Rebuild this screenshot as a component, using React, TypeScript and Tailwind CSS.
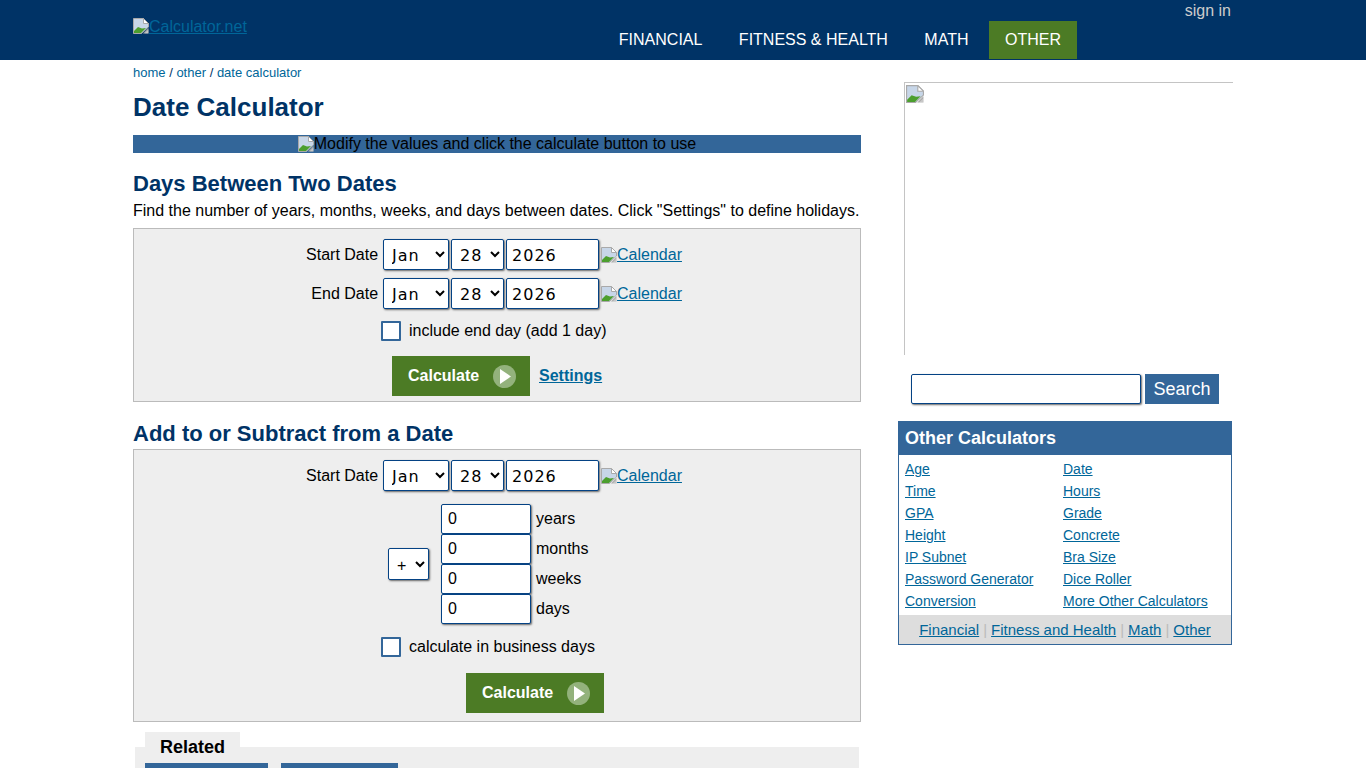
import React from "react";

const BrokenImage = ({ size = 16 }: { size?: number }) => (
    <svg width={size} height={size} viewBox="0 0 16 16" className="inline-block shrink-0 align-[-2px]">
        <path d="M0.5 0.5H10.5L15.5 5.5V9L8.5 15.5H0.5Z" fill="#c7d6e8" stroke="#a9a9a9" />
        <path d="M10.5 0.5V5.5H15.5Z" fill="#fff" stroke="#a9a9a9" />
        <path d="M1 15V13L5 9L9 10.5L13 10L8 15Z" fill="#4c9f2e" />
        <path d="M10 15.5L15.5 10V15.5Z" fill="#a9a9a9" />
        <path d="M11.5 15.5L15.5 11.5V15.5Z" fill="#ffffff" fillOpacity="0.35" />
    </svg>
);

const selectClass =
    "h-[31px] bg-white border border-[#044284] rounded-[2px] shadow-[1px_1px_2px_#666] font-['DejaVu_Sans',sans-serif] text-[16px] tracking-[1px] text-black pl-[4px] pt-[2px]";

const textInputClass =
    "bg-white border border-[#044284] rounded-[2px] shadow-[1px_1px_2px_#666] text-black outline-none";

const DateRow = ({ label, top }: { label: string; top: string }) => (
    <div className={`flex items-center justify-center pr-[6px] ${top}`}>
        <span className="w-[72px] text-right whitespace-nowrap">{label}</span>
        <select defaultValue="Jan" className={`${selectClass} ml-[5px] w-[66px]`}>
            <option>Jan</option>
            <option>Feb</option>
        </select>
        <select defaultValue="28" className={`${selectClass} ml-[2px] w-[53px]`}>
            <option>28</option>
            <option>29</option>
        </select>
        <input
            defaultValue="2026"
            className={`${textInputClass} ml-[2px] w-[93px] h-[31px] pl-[5px] pt-[2px] font-['DejaVu_Sans',sans-serif] tracking-[1px]`}
        />
        <a className="ml-[2px] flex items-center underline text-[#006699] cursor-pointer">
            <BrokenImage />
            Calendar
        </a>
    </div>
);

const CheckRow = ({ label, top }: { label: string; top: string }) => (
    <div className={`flex items-center ml-[247px] ${top}`}>
        <span className="w-5 h-5 bg-white border-2 border-[#336699] rounded-[1px] shrink-0" />
        <span className="ml-2 whitespace-nowrap">{label}</span>
    </div>
);

const CalculateButton = () => (
    <button className="w-[138px] h-10 bg-[#4c7b25] text-white font-bold flex items-center pl-4">
        Calculate
        <span className="ml-[14px] w-[23px] h-[23px] rounded-full bg-[#93b27c] flex items-center justify-center">
            <svg width="11" height="15" viewBox="0 0 11 15" className="ml-[2px]">
                <path d="M0 0L11 7.5L0 15Z" fill="#fff" />
            </svg>
        </span>
    </button>
);

const AmountRow = ({ label }: { label: string }) => (
    <div className="flex items-center">
        <input defaultValue="0" className={`${textInputClass} w-[90px] h-[30px] pl-[6px]`} />
        <span className="ml-[5px]">{label}</span>
    </div>
);

const otherLinks = [
    ["Age", "Date"],
    ["Time", "Hours"],
    ["GPA", "Grade"],
    ["Height", "Concrete"],
    ["IP Subnet", "Bra Size"],
    ["Password Generator", "Dice Roller"],
    ["Conversion", "More Other Calculators"],
];

const navItems = ["FINANCIAL", "FITNESS & HEALTH", "MATH", "OTHER"];

const App = () => {
    return (
        <div className="h-screen overflow-hidden bg-white font-['Liberation_Sans',Arial,sans-serif] text-[16px] leading-[18px] text-black">
            <div className="h-[60px] bg-[#003366]">
                <div className="w-[1100px] h-full mx-auto flex relative">
                    <a className="mt-[18px] h-[18px] flex items-start underline text-[#006699] cursor-pointer">
                        <BrokenImage />
                        Calculator.net
                    </a>
                    <div className="ml-[356px] mt-[21px] flex gap-[4.45px] h-[38px]">
                        {navItems.map((item) => (
                            <a
                                key={item}
                                className={`${item === "OTHER" ? "bg-[#4c7b25]" : ""} px-4 flex items-center text-white cursor-pointer`}
                            >
                                {item}
                            </a>
                        ))}
                    </div>
                    <a className="absolute right-[2px] top-[2px] text-[#cccccc] cursor-pointer">sign in</a>
                </div>
            </div>

            <div className="w-[1100px] mx-auto flex">
                <div className="w-[728px] shrink-0">
                    <div className="mt-[6px] text-[13px] leading-[14px] text-[#003366]">
                        <a className="text-[#006699] cursor-pointer">home</a> /{" "}
                        <a className="text-[#006699] cursor-pointer">other</a> /{" "}
                        <a className="text-[#006699] cursor-pointer">date calculator</a>
                    </div>
                    <h1 className="mt-3 text-[26px] leading-[30px] font-bold text-[#003366]">Date Calculator</h1>
                    <div className="mt-[13px] h-[18px] bg-[#336699] flex items-center justify-center">
                        <BrokenImage />
                        <span>Modify the values and click the calculate button to use</span>
                    </div>

                    <h2 className="mt-[18px] text-[22px] leading-[26px] font-bold text-[#003366]">Days Between Two Dates</h2>
                    <p className="mt-[5px] whitespace-nowrap">
                        Find the number of years, months, weeks, and days between dates. Click "Settings" to define holidays.
                    </p>
                    <div className="mt-2 h-[174px] bg-[#eeeeee] border border-[#bbbbbb]">
                        <DateRow label="Start Date" top="mt-[10px]" />
                        <DateRow label="End Date" top="mt-2" />
                        <CheckRow label="include end day (add 1 day)" top="mt-3" />
                        <div className="mt-[15px] flex items-center ml-[258px]">
                            <CalculateButton />
                            <a className="ml-[9px] font-bold underline text-[#006699] cursor-pointer">Settings</a>
                        </div>
                    </div>

                    <h2 className="mt-[19px] text-[22px] leading-[26px] font-bold text-[#003366]">Add to or Subtract from a Date</h2>
                    <div className="mt-[2px] h-[273px] bg-[#eeeeee] border border-[#bbbbbb]">
                        <DateRow label="Start Date" top="mt-[10px]" />
                        <div className="mt-[13px] flex items-center ml-[254px]">
                            <select defaultValue="+" className={`${selectClass} w-[41px] !h-[32px] font-['Liberation_Sans',sans-serif]`}>
                                <option>+</option>
                                <option>-</option>
                            </select>
                            <div className="ml-3 flex flex-col">
                                <AmountRow label="years" />
                                <AmountRow label="months" />
                                <AmountRow label="weeks" />
                                <AmountRow label="days" />
                            </div>
                        </div>
                        <CheckRow label="calculate in business days" top="mt-[13px]" />
                        <div className="mt-4 ml-[332px]">
                            <CalculateButton />
                        </div>
                    </div>

                    <div className="mt-[10px] mx-[2px]">
                        <div className="ml-[10px] w-[95px] h-[15px] bg-[#eeeeee] pl-[15px] text-[18px] leading-[31px] font-bold relative">
                            Related
                        </div>
                        <div className="h-[40px] bg-[#eeeeee] pt-4 pl-[10px] flex gap-[13px]">
                            <div className="w-[123px] h-10 bg-[#336699]" />
                            <div className="w-[117px] h-10 bg-[#336699]" />
                        </div>
                    </div>
                </div>

                <div className="ml-[37px] w-[335px] shrink-0">
                    <div className="mt-[22px] ml-[6px] w-[329px] h-[273px] border-t border-l border-[#c4c4c4] pt-[2px] pl-px">
                        <BrokenImage size={18} />
                    </div>
                    <div className="mt-[19px] ml-[13px] flex">
                        <input className={`${textInputClass} w-[230px] h-[30px]`} />
                        <button className="ml-1 w-[74px] h-[30px] bg-[#336699] text-white text-[18px]">Search</button>
                    </div>
                    <div className="mt-[17px] w-[334px] border border-[#336699]">
                        <div className="h-[33px] bg-[#336699] px-[6px] pb-[2px] flex items-center text-white text-[18px] font-bold">
                            Other Calculators
                        </div>
                        <div className="pt-[3px] pb-[3px] px-[6px] grid grid-cols-[158px_1fr] text-[14px] leading-[22px] text-[#006699]">
                            {otherLinks.flat().map((name) => (
                                <a key={name} className="underline cursor-pointer">
                                    {name}
                                </a>
                            ))}
                        </div>
                        <div className="h-[29px] bg-[#dddddd] flex items-center justify-center gap-1 text-[15px] text-[#bbbbbb]">
                            <a className="underline text-[#006699] cursor-pointer">Financial</a>|
                            <a className="underline text-[#006699] cursor-pointer">Fitness and Health</a>|
                            <a className="underline text-[#006699] cursor-pointer">Math</a>|
                            <a className="underline text-[#006699] cursor-pointer">Other</a>
                        </div>
                    </div>
                </div>
            </div>
        </div>
    );
};

export default App;
